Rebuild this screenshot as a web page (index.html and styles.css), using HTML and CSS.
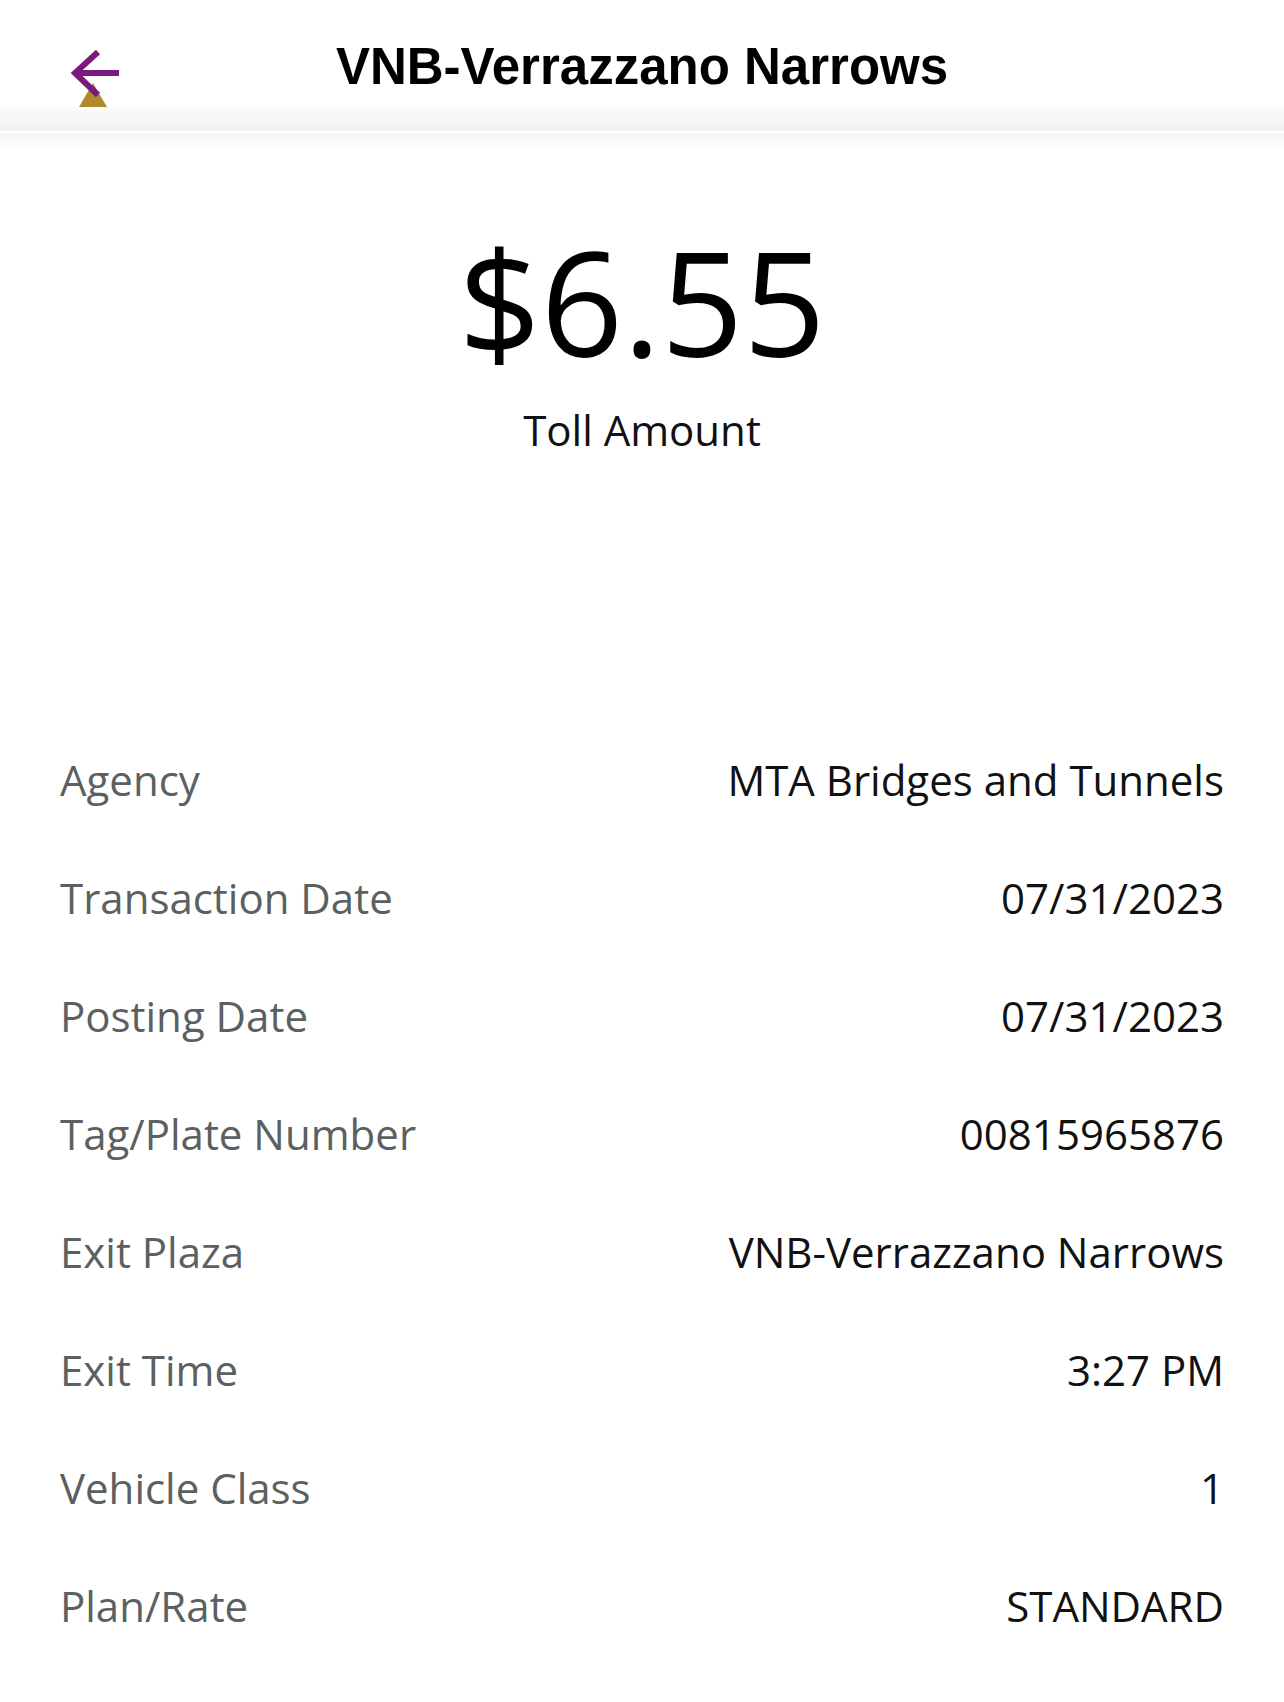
FILE: index.html
```html
<!DOCTYPE html>
<html>
<head>
    <meta charset="UTF-8">
    <meta name="viewport" content="width=device-width, initial-scale=1.0">
    <title>VNB-Verrazzano Narrows</title>
    <link rel="stylesheet" href="styles.css">
</head>
<body>
    <header class="topbar">
        <div class="back">
            <!-- back arrow over the gold marker -->
            <svg width="70" height="67" viewBox="0 0 70 67">
                <polygon points="19,67 47,67 33,43" fill="#b0892f"/>
                <path d="M59 33 H15 M38 12 L15 33 L38 55" fill="none" stroke="#7a1a7e" stroke-width="6"/>
            </svg>
        </div>
        <h1 class="title">VNB-Verrazzano Narrows</h1>
        <div></div>
    </header>
    <div class="topbar-shadow"></div>

    <main>
        <section class="summary">
            <div class="amount">$6.55</div>
            <div class="amount-label">Toll Amount</div>
        </section>

        <section class="details">
            <div class="row"><span class="label">Agency</span><span class="value">MTA Bridges and Tunnels</span></div>
            <div class="row"><span class="label">Transaction Date</span><span class="value">07/31/2023</span></div>
            <div class="row"><span class="label">Posting Date</span><span class="value">07/31/2023</span></div>
            <div class="row"><span class="label">Tag/Plate Number</span><span class="value">00815965876</span></div>
            <div class="row"><span class="label">Exit Plaza</span><span class="value">VNB-Verrazzano Narrows</span></div>
            <div class="row"><span class="label">Exit Time</span><span class="value">3:27 PM</span></div>
            <div class="row"><span class="label">Vehicle Class</span><span class="value">1</span></div>
            <div class="row"><span class="label">Plan/Rate</span><span class="value">STANDARD</span></div>
        </section>
    </main>
</body>
</html>
```

FILE: styles.css
```css
body {
    margin: 0;
    background-color: #fff;
    font-family: "Open Sans", sans-serif;
    color: #111;
}
/* Top bar */
.topbar {
    height: 107px;
    display: grid;
    grid-template-columns: 1fr auto 1fr;
    align-items: start;
    overflow: hidden;
}
.back {
    padding-top: 40px;
    padding-left: 60px;
}
.back svg {
    display: block;
}
.title {
    margin: 0;
    padding-top: 41px;
    font-family: "Liberation Sans", Arial, sans-serif;
    font-size: 51px;
    line-height: 51px;
    font-weight: bold;
    color: #000;
}
.topbar-shadow {
    height: 43px;
    background: linear-gradient(#fbfbfb 0, #f1f1f1 24px, #fff 24px, #fff 26px, #f5f5f5 26px, #fff 43px);
}
/* Toll amount */
.summary {
    margin-top: 79px;
    text-align: center;
}
.amount {
    font-size: 144px;
    line-height: 144px;
    color: #000;
}
.amount-label {
    margin-top: 36px;
    font-size: 42px;
    line-height: 42px;
}
/* Detail rows */
.details {
    margin-top: 270px;
    padding: 0 60px;
}
.row {
    display: flex;
    justify-content: space-between;
    height: 118px;
    line-height: 118px;
    font-size: 42px;
}
.label {
    color: #5b6060;
}
.value {
    color: #111;
}
```
